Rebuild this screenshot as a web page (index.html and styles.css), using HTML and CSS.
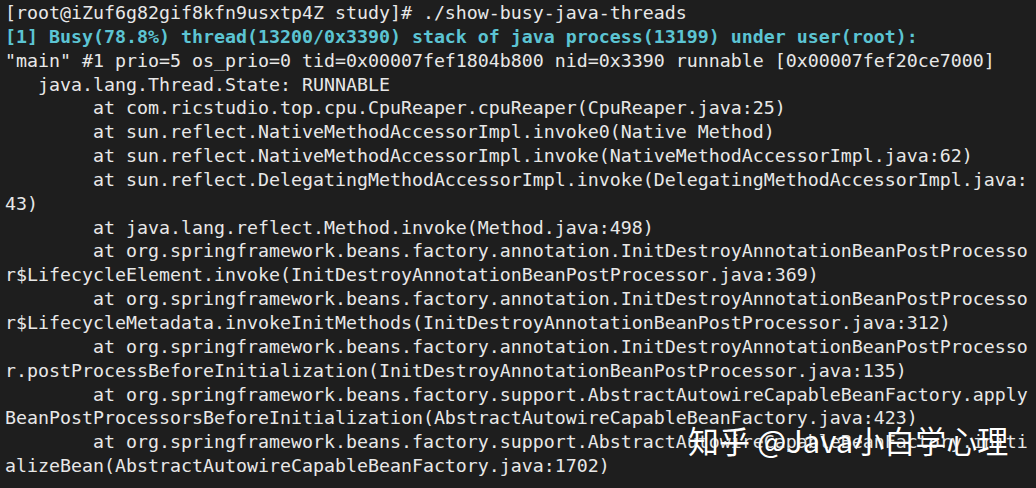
FILE: index.html
```html
<!DOCTYPE html>
<html lang="en">
<head>
<meta charset="utf-8">
<title>show-busy-java-threads</title>
<link rel="stylesheet" href="styles.css">
</head>
<body>
<main class="screen">
<pre class="term"><span class="line">[root@iZuf6g82gif8kfn9usxtp4Z study]# ./show-busy-java-threads</span>
<span class="line busy">[1] Busy(78.8%) thread(13200/0x3390) stack of java process(13199) under user(root):</span>
<span class="line">"main" #1 prio=5 os_prio=0 tid=0x00007fef1804b800 nid=0x3390 runnable [0x00007fef20ce7000]</span>
<span class="line">   java.lang.Thread.State: RUNNABLE</span>
<span class="line">        at com.ricstudio.top.cpu.CpuReaper.cpuReaper(CpuReaper.java:25)</span>
<span class="line">        at sun.reflect.NativeMethodAccessorImpl.invoke0(Native Method)</span>
<span class="line">        at sun.reflect.NativeMethodAccessorImpl.invoke(NativeMethodAccessorImpl.java:62)</span>
<span class="line">        at sun.reflect.DelegatingMethodAccessorImpl.invoke(DelegatingMethodAccessorImpl.java:</span>
<span class="line">43)</span>
<span class="line">        at java.lang.reflect.Method.invoke(Method.java:498)</span>
<span class="line">        at org.springframework.beans.factory.annotation.InitDestroyAnnotationBeanPostProcesso</span>
<span class="line">r$LifecycleElement.invoke(InitDestroyAnnotationBeanPostProcessor.java:369)</span>
<span class="line">        at org.springframework.beans.factory.annotation.InitDestroyAnnotationBeanPostProcesso</span>
<span class="line">r$LifecycleMetadata.invokeInitMethods(InitDestroyAnnotationBeanPostProcessor.java:312)</span>
<span class="line">        at org.springframework.beans.factory.annotation.InitDestroyAnnotationBeanPostProcesso</span>
<span class="line">r.postProcessBeforeInitialization(InitDestroyAnnotationBeanPostProcessor.java:135)</span>
<span class="line">        at org.springframework.beans.factory.support.AbstractAutowireCapableBeanFactory.apply</span>
<span class="line">BeanPostProcessorsBeforeInitialization(AbstractAutowireCapableBeanFactory.java:423)</span>
<span class="line">        at org.springframework.beans.factory.support.AbstractAutowireCapableBeanFactory.initi</span>
<span class="line">alizeBean(AbstractAutowireCapableBeanFactory.java:1702)</span></pre>
<div class="watermark">知乎 @Java小白学心理</div>
</main>
</body>
</html>
```

FILE: styles.css
```css
html, body {
  margin: 0;
  padding: 0;
  background: #1e1e1e;
}

.screen {
  position: relative;
  width: 1036px;
  height: 488px;
  overflow: hidden;
  background: #1e1e1e;
}

.term {
  margin: 0;
  padding: 1px 0 0 5px;
  font-family: "DejaVu Sans Mono", "Liberation Mono", monospace;
  font-size: 18.27px;
  line-height: 23.84px;
  color: #e8e8e8;
  white-space: pre;
}

.line {
  display: inline;
}

.busy {
  color: #5cc4d3;
  font-weight: bold;
}

.watermark {
  position: absolute;
  left: 688px;
  top: 418px;
  font-family: "Noto Sans CJK SC", "Noto Sans", sans-serif;
  font-weight: 400;
  font-size: 31px;
  line-height: 44px;
  color: #ffffff;
  white-space: nowrap;
  text-shadow: 0 0 1px rgba(0, 0, 0, 0.4);
}
```
